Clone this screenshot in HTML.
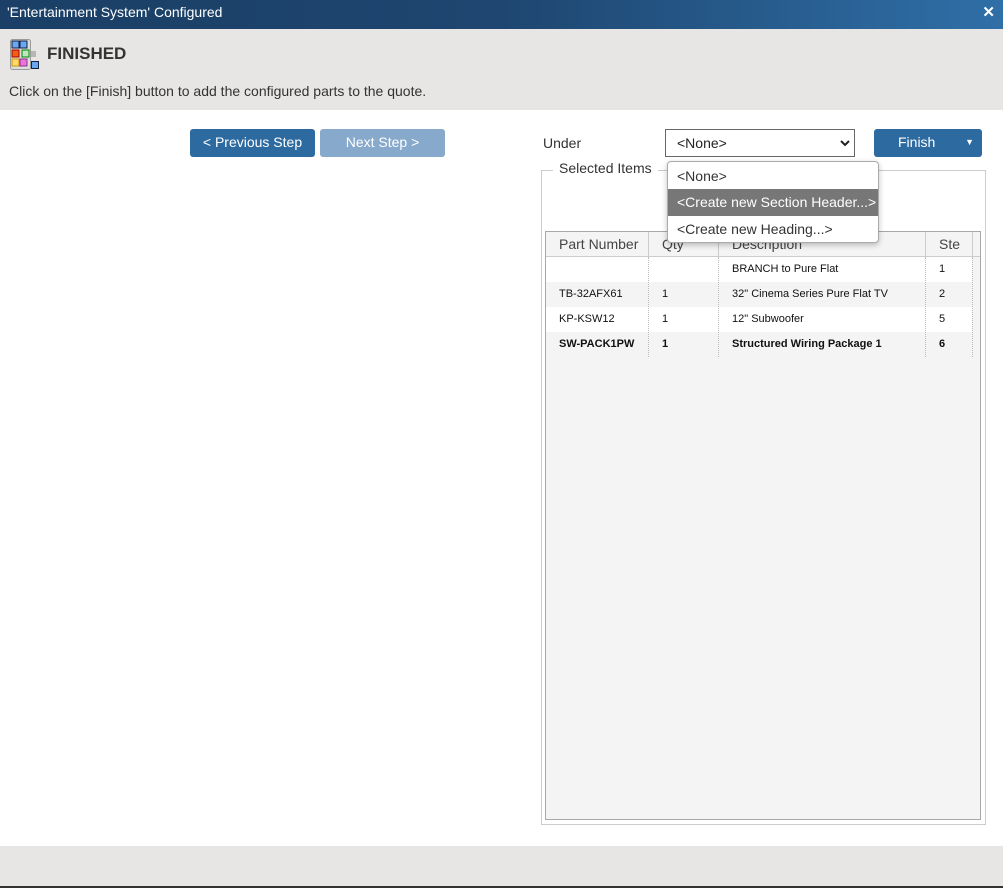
<!DOCTYPE html>
<html><head><style>
*{box-sizing:border-box;margin:0;padding:0}
body{width:1003px;height:888px;position:relative;background:#fff;font-family:"Liberation Sans",sans-serif;overflow:hidden;color:#333}
.abs{position:absolute}
.title{left:0;top:0;width:1003px;height:29px;background:linear-gradient(90deg,#1b3f66 0%,#1e4670 50%,#2f6fa7 100%);color:#fff;font-size:14px;line-height:25px;padding-left:7px}
.hdr{left:0;top:29px;width:1003px;height:81px;background:#e8e6e4}
.foot{left:0;top:846px;width:1003px;height:40px;background:#e8e6e4}
.btn{color:#fff;font-size:14px;text-align:center;line-height:27px;border-radius:3px}
.grid{left:545px;top:231px;width:436px;height:589px;border:1px solid #a8a8a8;background:#f4f4f4;font-size:11px;color:#111}
.row{position:absolute;left:0;width:426px;height:25px;line-height:25px}
.c{position:absolute;top:0;height:100%;padding-left:13px}
</style></head><body>
<div class="abs title">'Entertainment System' Configured<span style="position:absolute;right:8px;top:0;font-weight:bold;font-size:15px">✕</span></div>
<div class="abs hdr">
<svg class="abs" style="left:10px;top:10px" width="31" height="31" viewBox="0 0 31 31">
<rect x="0.5" y="0.5" width="20" height="30" rx="2" fill="#ddd" stroke="#999"/>
<rect x="2" y="2" width="7" height="7" fill="#6aa7f0" stroke="#124"/>
<rect x="10" y="2" width="7" height="7" fill="#6aa7f0" stroke="#124"/>
<rect x="2" y="11" width="7" height="7" fill="#f06010" stroke="#a00"/>
<rect x="12" y="11" width="7" height="7" fill="#bfe6bf" stroke="#080"/>
<rect x="2" y="20" width="7" height="7" fill="#ffd870" stroke="#c90"/>
<rect x="10" y="20" width="7" height="7" fill="#f070e0" stroke="#838"/>
<rect x="21.5" y="22.5" width="7" height="7" fill="#6aa7f0" stroke="#124"/>
<path d="M21 13h5M21 15h5M21 17h5" stroke="#888"/>
</svg>
<div class="abs" style="left:47px;top:15px;font-size:17px;font-weight:bold;color:#333">FINISHED</div>
<div class="abs" style="left:9px;top:54px;font-size:14px;color:#333">Click on the [Finish] button to add the configured parts to the quote.</div>
</div>
<div class="abs btn" style="left:190px;top:129px;width:125px;height:28px;background:#2d6aa0">&lt; Previous Step</div>
<div class="abs btn" style="left:320px;top:129px;width:125px;height:28px;background:#87a9cb">Next Step &gt;</div>
<div class="abs" style="left:543px;top:135px;font-size:14px">Under</div>
<div class="abs" style="left:665px;top:129px;width:190px;height:28px;border:1px solid #666;font-size:14px;line-height:26px;padding-left:11px;color:#222">&lt;None&gt;<svg class="abs" style="right:4px;top:9px" width="10" height="8"><path d="M1 2l4 4 4-4" stroke="#222" stroke-width="2" fill="none"/></svg></div>
<div class="abs btn" style="left:874px;top:129px;width:108px;height:28px;background:#2d6aa0;text-align:left;padding-left:24px">Finish<span style="position:absolute;right:8px;top:0;font-size:9px">▼</span></div>
<div class="abs" style="left:541px;top:170px;width:445px;height:655px;border:1px solid #ccc"></div>
<div class="abs" style="left:553px;top:160px;background:#fff;padding:0 6px;font-size:14px">Selected Items</div>
<div class="abs grid">
<div class="row" style="top:0;height:25px;background:#f4f4f4;border-bottom:1px solid #ccc;width:434px;font-size:14px;color:#444"><span class="c">Part Number</span><span class="c" style="left:102px;border-left:1px solid #ccc">Qty</span><span class="c" style="left:172px;border-left:1px solid #ccc">Description</span><span class="c" style="left:379px;border-left:1px solid #ccc">Ste</span><span class="c" style="left:426px;border-left:1px solid #ccc"></span></div>
<div class="row" style="top:25px;background:#fff"><span class="c"></span><span class="c" style="left:103px"></span><span class="c" style="left:173px">BRANCH to Pure Flat</span><span class="c" style="left:380px">1</span></div>
<div class="row" style="top:50px;background:#f4f4f4"><span class="c">TB-32AFX61</span><span class="c" style="left:103px">1</span><span class="c" style="left:173px">32" Cinema Series Pure Flat TV</span><span class="c" style="left:380px">2</span></div>
<div class="row" style="top:75px;background:#fff"><span class="c">KP-KSW12</span><span class="c" style="left:103px">1</span><span class="c" style="left:173px">12" Subwoofer</span><span class="c" style="left:380px">5</span></div>
<div class="row" style="top:100px;background:#f4f4f4;font-weight:bold"><span class="c">SW-PACK1PW</span><span class="c" style="left:103px">1</span><span class="c" style="left:173px">Structured Wiring Package 1</span><span class="c" style="left:380px">6</span></div>
<div class="abs" style="left:102px;top:25px;height:100px;border-left:1px dotted #bbb"></div>
<div class="abs" style="left:172px;top:25px;height:100px;border-left:1px dotted #bbb"></div>
<div class="abs" style="left:379px;top:25px;height:100px;border-left:1px dotted #bbb"></div>
<div class="abs" style="left:426px;top:25px;height:100px;border-left:1px dotted #bbb"></div>
</div>
<div class="abs" style="left:667px;top:161px;width:212px;height:82px;background:#fff;border:1px solid #aaa;border-radius:4px;box-shadow:0 2px 6px rgba(0,0,0,.25);font-size:14px;color:#333;overflow:hidden">
<div style="height:27px;line-height:28px;padding-left:9px">&lt;None&gt;</div>
<div style="height:27px;line-height:27px;padding-left:9px;background:#777;color:#fff">&lt;Create new Section Header...&gt;</div>
<div style="height:27px;line-height:27px;padding-left:9px">&lt;Create new Heading...&gt;</div>
</div>
<div class="abs foot"></div>
<div class="abs" style="left:0;top:886px;width:1003px;height:2px;background:#333"></div>
</body></html>
